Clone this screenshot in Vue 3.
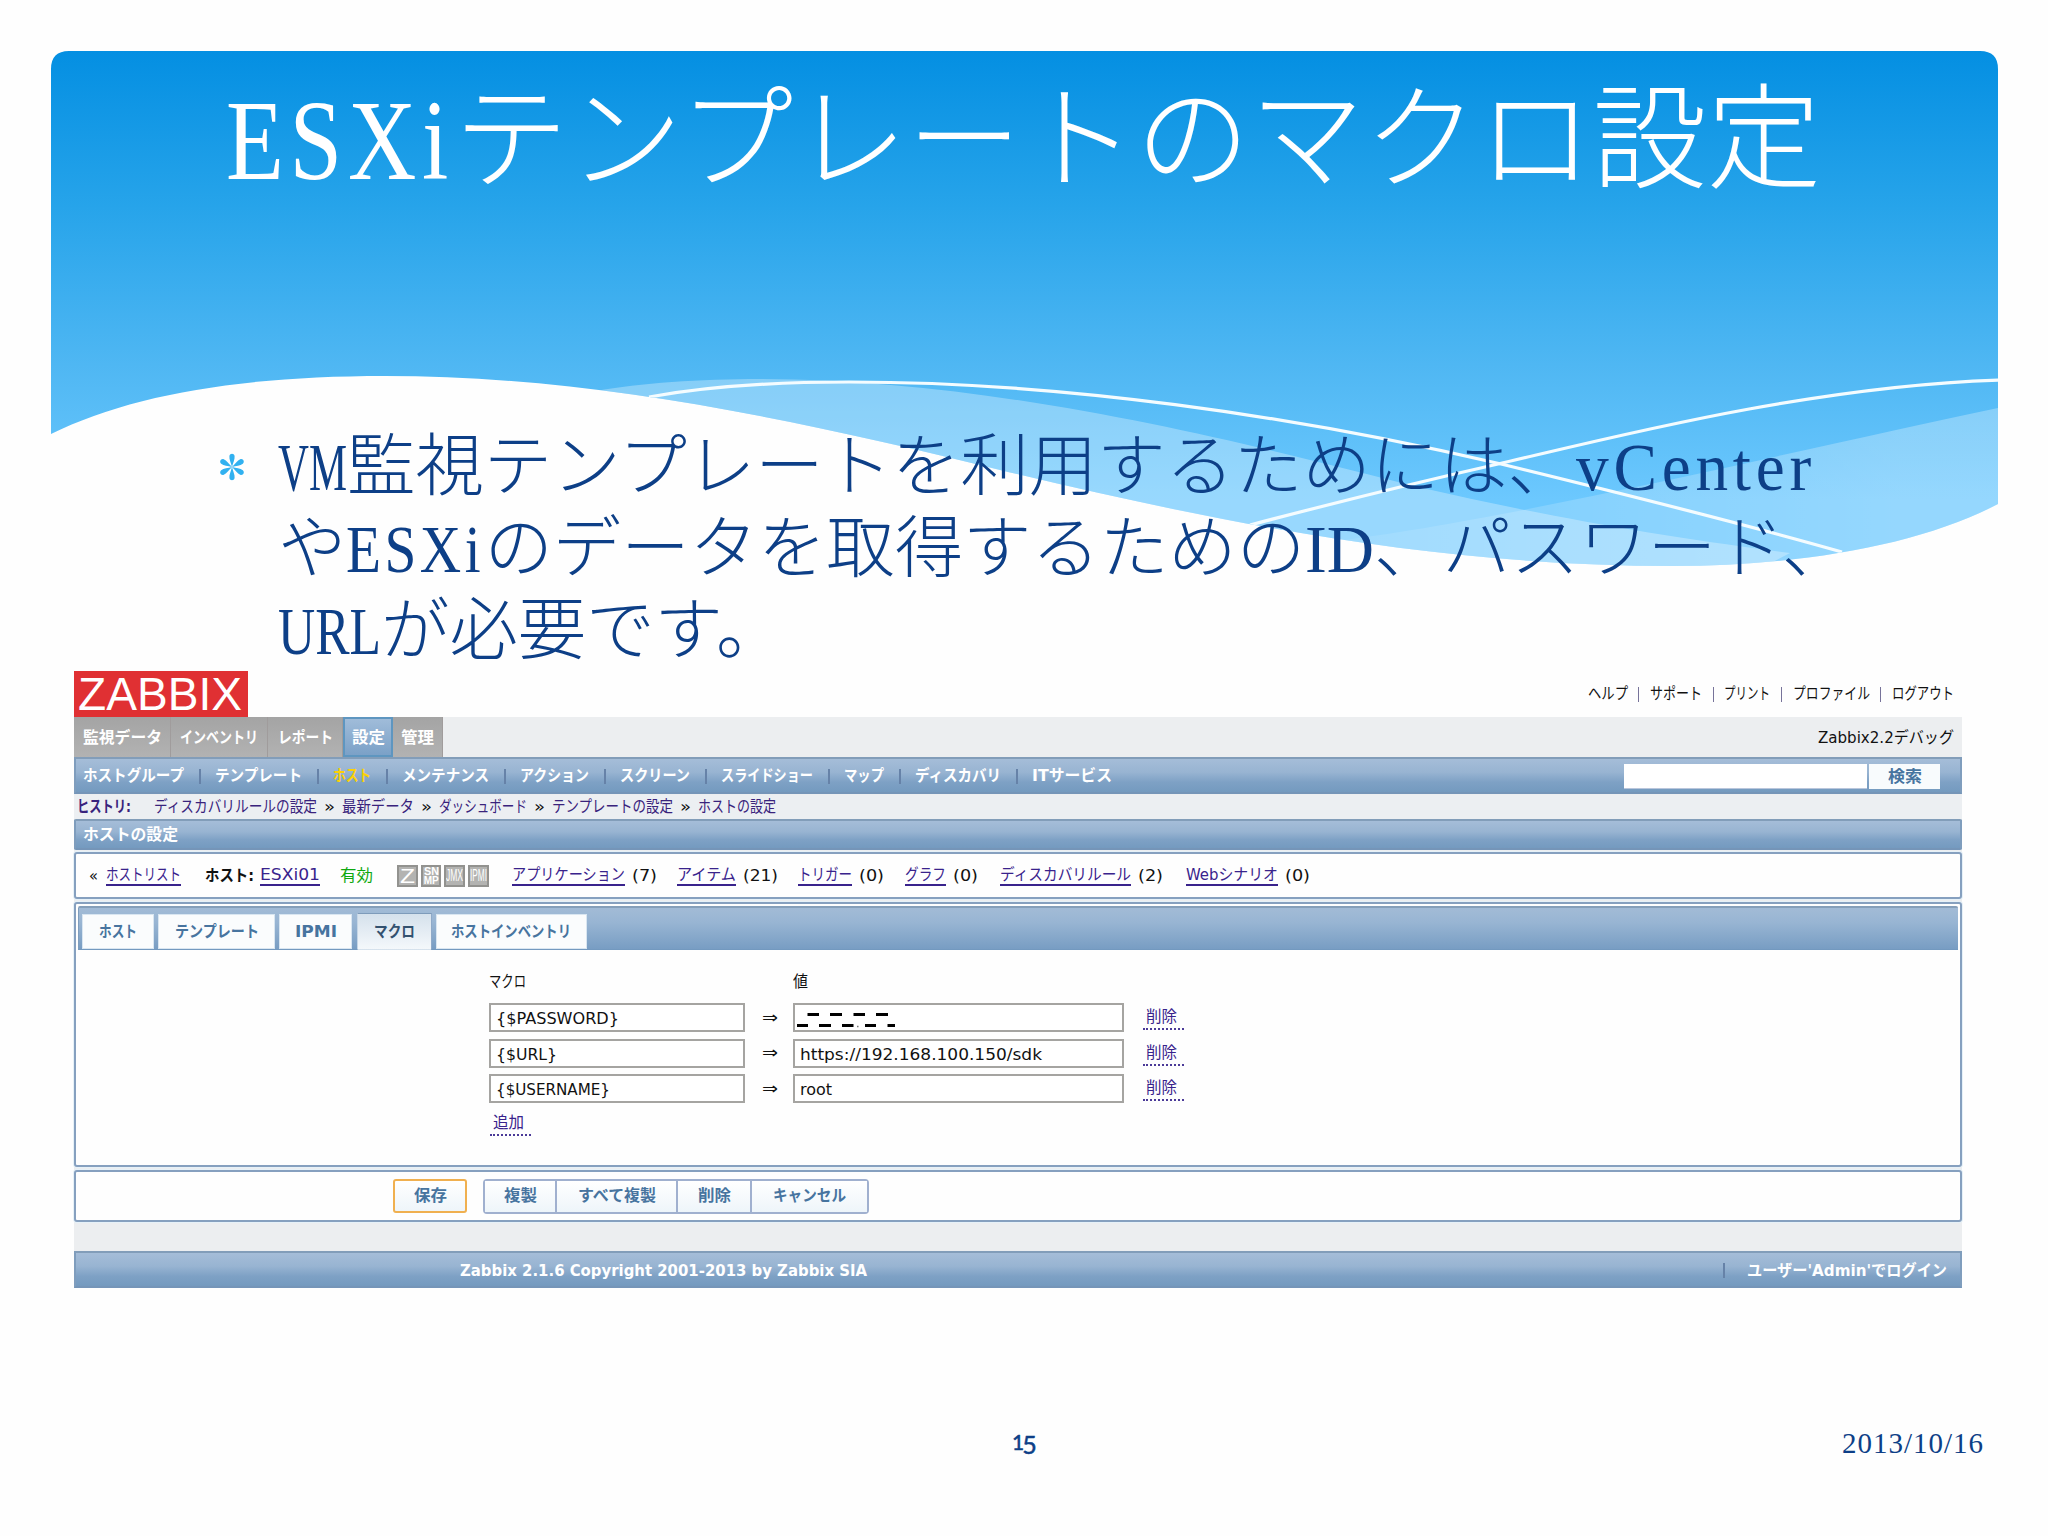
<script setup>
// Squeezes or stretches a run of text to a given advance width.
const vFit = {
  mounted(el, { value }) {
    const natural = el.getBoundingClientRect().width
    el.style.transform = `scaleX(${value / natural})`
    el.style.marginRight = `${value - natural}px`
  },
}

const topLinks = [
  ['ヘルプ', 40], ['サポート', 52], ['プリント', 46], ['プロファイル', 77], ['ログアウト', 62],
]
const mainTabs = [
  { text: '監視データ', fit: 79, width: 97 },
  { text: 'インベントリ', fit: 78, width: 97 },
  { text: 'レポート', fit: 55, width: 75 },
  { text: '設定', fit: 33, width: 50, active: true },
  { text: '管理', fit: 33, width: 50 },
]
const subMenu = [
  { text: 'ホストグループ', fit: 101 },
  { text: 'テンプレート', fit: 87 },
  { text: 'ホスト', fit: 38, active: true },
  { text: 'メンテナンス', fit: 87 },
  { text: 'アクション', fit: 69 },
  { text: 'スクリーン', fit: 70 },
  { text: 'スライドショー', fit: 92 },
  { text: 'マップ', fit: 40 },
  { text: 'ディスカバリ', fit: 86 },
  { text: 'ITサービス', fit: 80 },
]
const history = [
  ['ディスカバリルールの設定', 163], ['最新データ', 72], ['ダッシュボード', 88],
  ['テンプレートの設定', 121], ['ホストの設定', 78],
]
const counts = [
  { text: 'アプリケーション', fit: 113, n: '(7)', nfit: 25, gap: 20 },
  { text: 'アイテム', fit: 59, n: '(21)', nfit: 35, gap: 20 },
  { text: 'トリガー', fit: 54, n: '(0)', nfit: 25, gap: 21 },
  { text: 'グラフ', fit: 41, n: '(0)', nfit: 25, gap: 22 },
  { text: 'ディスカバリルール', fit: 131, n: '(2)', nfit: 25, gap: 23 },
  { text: 'Webシナリオ', fit: 92, n: '(0)', nfit: 25, gap: 0 },
]
const formTabs = [
  { text: 'ホスト', fit: 38, width: 72 },
  { text: 'テンプレート', fit: 84, width: 117 },
  { text: 'IPMI', fit: 42, width: 73 },
  { text: 'マクロ', fit: 41, width: 75, active: true },
  { text: 'ホストインベントリ', fit: 120, width: 151 },
]
const macros = [
  { name: '{$PASSWORD}', nfit: 123, value: '', masked: true },
  { name: '{$URL}', nfit: 61, value: 'https://192.168.100.150/sdk', vfit: 242 },
  { name: '{$USERNAME}', nfit: 114, value: 'root', vfit: 32 },
]
const buttons = [
  { text: '複製', fit: 33, width: 72 },
  { text: 'すべて複製', fit: 78, width: 121 },
  { text: '削除', fit: 33, width: 74 },
  { text: 'キャンセル', fit: 73, width: 115 },
]
</script>

<template>
  <div class="slide">
    <svg class="backdrop" viewBox="0 0 2048 640" width="2048" height="640">
      <defs>
        <linearGradient id="sky" x1="0" y1="51" x2="0" y2="500" gradientUnits="userSpaceOnUse">
          <stop offset="0" stop-color="#048fe2" />
          <stop offset="0.35" stop-color="#27a4ea" />
          <stop offset="0.7" stop-color="#4fb7f3" />
          <stop offset="1" stop-color="#6cc8fe" />
        </linearGradient>
        <linearGradient id="haze" x1="1350" y1="0" x2="1900" y2="0" gradientUnits="userSpaceOnUse">
          <stop offset="0" stop-color="#fff" stop-opacity="0.08" />
          <stop offset="0.4" stop-color="#fff" stop-opacity="0.18" />
          <stop offset="1" stop-color="#fff" stop-opacity="0.28" />
        </linearGradient>
        <clipPath id="shape">
          <path d="M51 434 V69 Q51 51 69 51 H1980 Q1998 51 1998 69 V504 C1920 545 1800 566 1672 566 C1450 566 1240 528 1000 470 C760 410 570 376 385 376 C240 376 130 395 51 434Z" />
        </clipPath>
      </defs>
      <g clip-path="url(#shape)">
        <rect x="51" y="51" width="1947" height="520" fill="url(#sky)" />
        <path d="M596 391 C640 383 700 379 760 379 C1010 379 1270 450 1418 487 C1540 515 1650 535 1790 553 L1700 600 H596Z" fill="#fff" fill-opacity="0.3" />
        <path d="M1998 408 C1869 435 1700 475 1528 509 C1450 524 1400 533 1320 543 L1500 600 H1998Z" fill="url(#haze)" />
        <g fill="none" stroke="#f4fcff" stroke-width="3.2">
          <path d="M649 397 C710 386 780 382 849 382 C1060 382 1290 415 1501 464 C1620 493 1730 520 1842 552" />
          <path d="M1250 525 C1330 504 1410 484 1498 464 C1610 438 1810 386 2000 380" />
        </g>
      </g>
    </svg>

    <h1 class="title"><span v-fit="228" class="fit wide">ESXi</span><span>テンプレートのマクロ設定</span></h1>

    <div class="bullet">
      <svg class="star" viewBox="-14 -14 28 28" width="28" height="28">
        <g fill="#31b1f0">
          <path v-for="a in [0, 60, 120, 180, 240, 300]" :key="a" :transform="`rotate(${a})`" d="M0 0 C-1 -4 -3 -8 -2.600 -11 C-2 -14 2 -14 2.600 -11 C3 -8 1 -4 0 0Z" />
        </g>
      </svg>
      <p class="body">
        <span v-fit="69" class="fit">VM</span>監視テンプレートを利用するためには、<span v-fit="240" class="fit spaced">vCenter</span><br>や<span v-fit="138" class="fit wide">ESXi</span>のデータを取得するための<span v-fit="69" class="fit">ID</span>、パスワード、<br><span v-fit="103" class="fit">URL</span>が必要です。
      </p>
    </div>

    <div class="app">
      <div class="head">
        <div class="logo"><span v-fit="164" class="fit">ZABBIX</span></div>
        <div class="links">
          <template v-for="(l, i) in topLinks" :key="l[0]">
            <i v-if="i" class="bar" /><span v-fit="l[1]" class="fit">{{ l[0] }}</span>
          </template>
        </div>
      </div>

      <div class="tabs">
        <div v-for="t in mainTabs" :key="t.text" class="tab" :class="{ on: t.active }" :style="{ width: t.width + 'px' }">
          <span v-fit="t.fit" class="fit">{{ t.text }}</span>
        </div>
        <span v-fit="136" class="fit server">Zabbix2.2デバッグ</span>
      </div>

      <div class="menu blue">
        <template v-for="(m, i) in subMenu" :key="m.text">
          <i v-if="i" class="bar" /><span v-fit="m.fit" class="fit" :class="{ on: m.active }">{{ m.text }}</span>
        </template>
        <div class="search">
          <div class="query" />
          <div class="go"><span v-fit="34" class="fit">検索</span></div>
        </div>
      </div>

      <div class="history">
        <b v-fit="54" class="fit">ヒストリ:</b>
        <div class="crumbs">
          <template v-for="(h, i) in history" :key="h[0]">
            <span v-if="i" v-fit="11" class="fit sep">»</span><span v-fit="h[1]" class="fit">{{ h[0] }}</span>
          </template>
        </div>
      </div>

      <div class="heading blue"><span v-fit="95" class="fit">ホストの設定</span></div>

      <div class="box hostbar">
        <span v-fit="9" class="fit back">«</span>
        <a><span v-fit="75" class="fit">ホストリスト</span></a>
        <b v-fit="49" class="fit host">ホスト:</b>
        <a class="name"><span v-fit="60" class="fit">ESXi01</span></a>
        <span v-fit="33" class="fit ok">有効</span>
        <div class="badges">
          <div class="badge z"><span v-fit="15" class="fit">Z</span></div>
          <div class="badge two"><span v-fit="15" class="fit">SN</span><span v-fit="15" class="fit">MP</span></div>
          <div class="badge"><span v-fit="17" class="fit">JMX</span></div>
          <div class="badge"><span v-fit="17" class="fit">IPMI</span></div>
        </div>
        <div v-for="c in counts" :key="c.text" class="count" :style="{ marginRight: c.gap + 'px' }">
          <a><span v-fit="c.fit" class="fit">{{ c.text }}</span></a>
          <span v-fit="c.nfit" class="fit">{{ c.n }}</span>
        </div>
      </div>

      <div class="box form">
        <div class="formtabs">
          <div v-for="t in formTabs" :key="t.text" class="ftab" :class="{ on: t.active }" :style="{ width: t.width + 'px' }">
            <span v-fit="t.fit" class="fit">{{ t.text }}</span>
          </div>
        </div>
        <div class="grid labels">
          <div><span v-fit="37" class="fit">マクロ</span></div><div /><div><span v-fit="15" class="fit">値</span></div>
        </div>
        <div v-for="m in macros" :key="m.name" class="grid macro">
          <div class="input"><span v-fit="m.nfit" class="fit">{{ m.name }}</span></div>
          <div class="arrow"><span v-fit="16" class="fit">⇒</span></div>
          <div class="input">
            <svg v-if="m.masked" class="mask" width="102" height="20" viewBox="0 0 102 20">
              <path d="M12.5 5.5h11.5M35 5.5h12M58.5 5.5h11.5M81 5.5h12M2 16.5h11M24 16.5h12M47 16.5h11.5M70 16.5h11M92.5 16.5h7.5" stroke="#000" stroke-width="3" />
              <path d="M62 17.5h1.5" stroke="#777" stroke-width="1.5" />
            </svg>
            <span v-else v-fit="m.vfit" class="fit">{{ m.value }}</span>
          </div>
          <div class="link"><span v-fit="31" class="fit">削除</span></div>
        </div>
        <div class="link add"><span v-fit="31" class="fit">追加</span></div>
      </div>

      <div class="box actions">
        <div class="btn save"><span v-fit="33" class="fit">保存</span></div>
        <div class="group">
          <div v-for="b in buttons" :key="b.text" class="btn" :style="{ width: b.width + 'px' }">
            <span v-fit="b.fit" class="fit">{{ b.text }}</span>
          </div>
        </div>
      </div>

      <div class="foot blue">
        <span v-fit="407" class="fit copy">Zabbix 2.1.6 Copyright 2001-2013 by Zabbix SIA</span>
        <i class="bar" />
        <span v-fit="200" class="fit">ユーザー'Admin'でログイン</span>
      </div>
    </div>

    <div class="slidefoot">
      <span class="page"><span>1</span><span class="low">5</span></span>
      <span v-fit="142" class="fit date">2013/10/16</span>
    </div>
  </div>
</template>

<style>
body { background: #fefefe; }
</style>

<style scoped>
* { box-sizing: border-box; }
.slide {
  position: relative;
  display: flex;
  flex-direction: column;
  width: 2048px;
  height: 1536px;
  overflow: hidden;
  background: #fefefe;
}
.backdrop { position: absolute; left: 0; top: 0; }
.fit { display: inline-block; white-space: nowrap; transform-origin: 0 50%; flex: none; }
.bar { flex: none; width: 2px; height: 15px; background: #6682a8; }

.title {
  position: relative;
  margin: 61px 0 0 226px;
  height: 161px;
  font: 300 114.2px/160px "Liberation Serif", "Noto Sans CJK JP", serif;
  color: #fff;
  white-space: nowrap;
}
.wide { letter-spacing: 0.06em; }
.bullet { position: relative; display: flex; margin: 204px 0 0 218px; height: 245px; }
.star { margin: 27px 32px 0 0; flex: none; }
.body {
  margin: 0;
  font: 300 68.4px/82px "Liberation Serif", "Noto Sans CJK JP", serif;
  color: #0d3f87;
  white-space: nowrap;
}
.spaced { letter-spacing: 5px; }

.app {
  position: relative;
  display: flex;
  flex-direction: column;
  width: 1888px;
  height: 617px;
  margin-left: 74px;
  background: linear-gradient(#fefefe 46px, #eceef0 46px);
  font: 16px/20px "DejaVu Sans", "Noto Sans CJK JP", sans-serif;
  color: #111;
}
.blue {
  background: linear-gradient(#a5bdd8, #98b4d2 40%, #7ea1c5 70%, #749abf);
  border: 2px solid #829db9;
  border-color: #829db9 #7f9dbd #7595b8;
  color: #fff;
  font-weight: bold;
  display: flex;
  align-items: center;
}
.head { display: flex; justify-content: space-between; height: 46px; }
.logo {
  width: 174px;
  height: 46px;
  padding-left: 4px;
  background: #e03033;
  color: #fff;
  font: 46px/47px "Liberation Sans", sans-serif;
}
.links { display: flex; align-items: center; gap: 10.7px; padding-right: 8px; }
.links .bar { width: 1px; background: #77739a; }
.tabs { display: flex; align-items: center; height: 40px; padding-right: 8px; }
.tab {
  display: flex;
  align-items: center;
  justify-content: center;
  height: 40px;
  padding-top: 2px;
  background: linear-gradient(#a4a4a4, #b2b2b2);
  border-right: 1px solid #a09c9c;
  color: #fff;
  font-weight: bold;
}
.tab.on { background: linear-gradient(#a0bcd9, #7ba1c7); border: 2px solid #5e96c0; }
.server { margin-left: auto; padding-top: 2px; }
.menu { height: 37px; padding: 1px 20px 0 7px; gap: 14.5px; margin-bottom: 1px; }
.menu .on { color: #fdd106; }
.search { display: flex; margin-left: auto; height: 25px; gap: 2px; }
.query { width: 243px; background: #fff; border-bottom: 1px solid #b9c6dc; }
.go {
  display: flex;
  align-items: center;
  justify-content: center;
  width: 71px;
  padding-top: 2px;
  background: #f8fbfd;
  color: #47749f;
}
.history { display: flex; align-items: center; height: 24px; padding-left: 3px; color: #39237c; background: #eceff2; }
.crumbs { display: flex; align-items: center; gap: 7px; margin-left: 23px; }
.sep { color: #111; }
.heading { height: 31px; padding-left: 7px; border-radius: 2px; margin-bottom: 2px; }
.box { background: #fefefe; border: 2px solid #86a0bf; border-radius: 3px; box-shadow: 0 0 0 1px #e6f1f8; }
.hostbar { display: flex; align-items: center; height: 47px; padding: 1px 0 0 13px; margin-bottom: 3px; }
.hostbar a { display: block; height: 20px; border-bottom: 2px solid #39238c; color: #39238c; line-height: 18px; }
.back { margin-left: 0; }
.back + a { margin-left: 7.5px; }
.host { margin: 0 0 0 24px; color: #111; }
.name { margin-left: 6px; }
.ok { color: #0fa80f; margin-left: 20.5px; }
.badges { display: flex; gap: 3px; margin: 0 23px 0 24px; }
.badge {
  display: flex;
  flex-direction: column;
  align-items: flex-start;
  width: 20.7px;
  height: 22px;
  background: #b3b3b1;
  border: 2px solid #92928f;
  color: #fff;
  font: 16px/18px "Liberation Sans", sans-serif;
}
.badge.z { font-size: 20px; padding-left: 1px; }
.badge.two { font: bold 10px/9px "Liberation Sans", sans-serif; padding-left: 1px; }
.count { display: flex; gap: 7px; }

.form { height: 265px; padding: 2px; margin-bottom: 3px; }
.formtabs {
  display: flex;
  align-items: flex-end;
  gap: 4.2px;
  height: 44px;
  padding: 0 0 0 3px;
  background: linear-gradient(#a2bbd6, #98b5d3 35%, #789dc3);
  border-top: 2px solid #859fba;
  border-left: 1px solid #7f9dbd;
  border-bottom: 1px solid #7399bf;
  border-radius: 2px 2px 0 0;
}
.ftab {
  display: flex;
  align-items: center;
  justify-content: center;
  height: 35px;
  background: #fafcfd;
  border: 1px solid #d9e6f1;
  color: #47749f;
  font-weight: bold;
}
.ftab.on { height: 37px; margin-bottom: -1px; background: linear-gradient(#d5e1ec, #f4f8fb); border-color: #7e9bba #8ea9c8 transparent #c5d6e6; color: #33516f; }
.grid { display: grid; grid-template-columns: 256px 48px 331px auto; align-items: center; justify-content: start; }
.labels { margin: 22px 0 0 411px; height: 20px; }
.macro { height: 29px; margin: 0 0 6.5px 411px; }
.labels + .macro { margin-top: 11px; }
.input { height: 29px; border: 2px solid #a5a4a1; background: #fff; padding: 4px 0 0 5px; line-height: 20px; }
.mask { display: block; margin: 0 0 0 -5px; }
.arrow { display: flex; justify-content: center; padding-left: 2px; }
.link { width: 41px; height: 23px; margin: 2px 0 0 19px; padding-left: 3px; border-bottom: 2px dotted #4b3a98; color: #39238c; line-height: 20px; }
.link.add { margin: 10px 0 0 412px; }

.actions { display: flex; align-items: center; height: 52px; padding-left: 317px; margin-bottom: 29px; }
.btn {
  display: flex;
  align-items: center;
  justify-content: center;
  height: 34px;
  background: linear-gradient(#fff, #eef5fa);
  color: #47749f;
  font-weight: bold;
  border-right: 2px solid #a0b0cf;
}
.save { width: 74px; border: 2px solid #f0b050; border-radius: 3px; }
.group { display: flex; margin-left: 16px; border: 2px solid #a0b0cf; border-radius: 4px; }
.group .btn { height: 31px; }
.group .btn:last-child { border-right: 0; }
.foot { height: 37px; padding: 2px 13px 0 384px; }
.foot .bar { margin: 0 22px 0 auto; }

.slidefoot { position: relative; display: flex; align-items: center; margin-top: 135px; height: 40px; padding: 0 64px 0 1012px; color: #0d3f87; }
.page { margin-top: -5px; font: 21px/24px Lato, sans-serif; -webkit-text-stroke: 0.5px #0d3f87; }
.low { display: inline-block; font-size: 25px; transform: translateY(4px); margin-left: -2px; }
.date { margin-left: auto; font: 29px/32px "Liberation Serif", serif; letter-spacing: 1px; }
</style>
